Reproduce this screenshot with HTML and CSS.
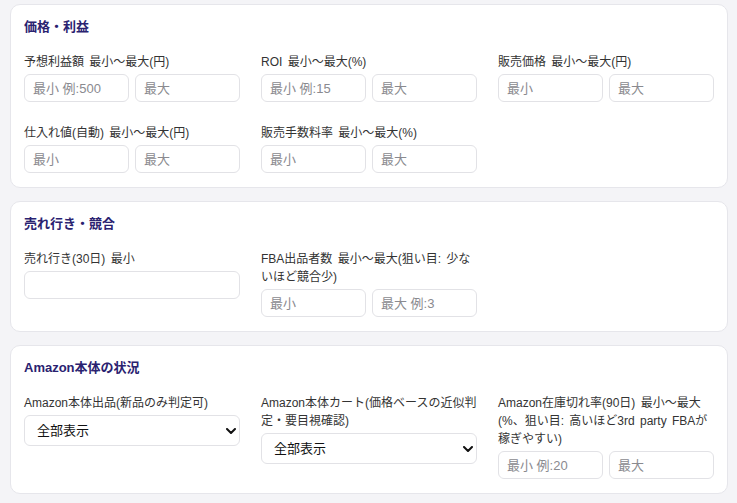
FILE: index.html
```html
<!DOCTYPE html>
<html lang="ja">
<head>
    <meta charset="UTF-8">
    <meta name="viewport" content="width=device-width, initial-scale=1.0">
    <title>検索条件</title>
    <link rel="stylesheet" href="styles.css">
</head>
<body>
    <div class="page">
        <section class="card">
            <h3 class="card-title">価格・利益</h3>
            <div class="field-grid">
                <div class="field">
                    <label>予想利益額 最小〜最大(円)</label>
                    <div class="range">
                        <input type="text" placeholder="最小 例:500">
                        <input type="text" placeholder="最大">
                    </div>
                </div>
                <div class="field">
                    <label>ROI 最小〜最大(%)</label>
                    <div class="range">
                        <input type="text" placeholder="最小 例:15">
                        <input type="text" placeholder="最大">
                    </div>
                </div>
                <div class="field">
                    <label>販売価格 最小〜最大(円)</label>
                    <div class="range">
                        <input type="text" placeholder="最小">
                        <input type="text" placeholder="最大">
                    </div>
                </div>
                <div class="field">
                    <label>仕入れ値(自動) 最小〜最大(円)</label>
                    <div class="range">
                        <input type="text" placeholder="最小">
                        <input type="text" placeholder="最大">
                    </div>
                </div>
                <div class="field">
                    <label>販売手数料率 最小〜最大(%)</label>
                    <div class="range">
                        <input type="text" placeholder="最小">
                        <input type="text" placeholder="最大">
                    </div>
                </div>
            </div>
        </section>

        <section class="card">
            <h3 class="card-title">売れ行き・競合</h3>
            <div class="field-grid">
                <div class="field">
                    <label>売れ行き(30日) 最小</label>
                    <input type="text">
                </div>
                <div class="field">
                    <label>FBA出品者数 最小〜最大(狙い目: 少ないほど競合少)</label>
                    <div class="range">
                        <input type="text" placeholder="最小">
                        <input type="text" placeholder="最大 例:3">
                    </div>
                </div>
            </div>
        </section>

        <section class="card">
            <h3 class="card-title">Amazon本体の状況</h3>
            <div class="field-grid">
                <div class="field">
                    <label>Amazon本体出品(新品のみ判定可)</label>
                    <div class="select-wrap">
                        <select>
                            <option>全部表示</option>
                            <option>出品あり</option>
                            <option>出品なし</option>
                        </select>
                        <svg class="chevron" width="10" height="6" viewBox="0 0 10 6"><path d="M1 1l4 4 4-4" fill="none" stroke="#111" stroke-width="2" stroke-linecap="round" stroke-linejoin="round"/></svg>
                    </div>
                </div>
                <div class="field">
                    <label>Amazon本体カート(価格ベースの近似判定・要目視確認)</label>
                    <div class="select-wrap">
                        <select>
                            <option>全部表示</option>
                            <option>カートあり</option>
                            <option>カートなし</option>
                        </select>
                        <svg class="chevron" width="10" height="6" viewBox="0 0 10 6"><path d="M1 1l4 4 4-4" fill="none" stroke="#111" stroke-width="2" stroke-linecap="round" stroke-linejoin="round"/></svg>
                    </div>
                </div>
                <div class="field">
                    <label>Amazon在庫切れ率(90日) 最小〜最大(%、狙い目: 高いほど3rd party FBAが稼ぎやすい)</label>
                    <div class="range">
                        <input type="text" placeholder="最小 例:20">
                        <input type="text" placeholder="最大">
                    </div>
                </div>
            </div>
        </section>
    </div>
</body>
</html>
```

FILE: styles.css
```css
body {
    margin: 0;
    padding: 0;
    background-color: #f4f4f7;
    font-family: "Liberation Sans", "Noto Sans CJK JP", sans-serif;
    color: #333;
}
.page {
    padding: 4px 9px 0 10px;
}
.card {
    background-color: #fff;
    border: 1px solid #e6e6eb;
    border-radius: 10px;
    padding: 13px 13px 14px;
    margin-bottom: 13px;
}
.card-title {
    margin: 0 0 17px;
    font-size: 13px;
    line-height: 18px;
    font-weight: bold;
    color: #2a2270;
}
.field-grid {
    display: grid;
    grid-template-columns: repeat(3, 1fr);
    column-gap: 21px;
    row-gap: 22px;
    align-items: start;
}
.field label {
    display: block;
    font-size: 12px;
    line-height: 18px;
    word-spacing: 2px;
    color: #333;
    margin-bottom: 3px;
}
.range {
    display: flex;
    gap: 6px;
}
input[type="text"] {
    display: block;
    width: 100%;
    min-width: 0;
    height: 28px;
    padding: 0 8px;
    border: 1px solid #e2e2e6;
    border-radius: 6px;
    box-sizing: border-box;
    font-family: inherit;
    font-size: 13px;
    color: #111;
    background-color: #fff;
}
input::placeholder {
    color: #8a8a8f;
}
.select-wrap {
    position: relative;
}
select {
    display: block;
    width: 100%;
    height: 31px;
    padding: 0 12px;
    border: 1px solid #e2e2e6;
    border-radius: 6px;
    box-sizing: border-box;
    appearance: none;
    -webkit-appearance: none;
    background-color: #fff;
    font-family: inherit;
    font-size: 13px;
    color: #111;
}
.chevron {
    position: absolute;
    right: 4px;
    top: 13px;
    pointer-events: none;
}
```
